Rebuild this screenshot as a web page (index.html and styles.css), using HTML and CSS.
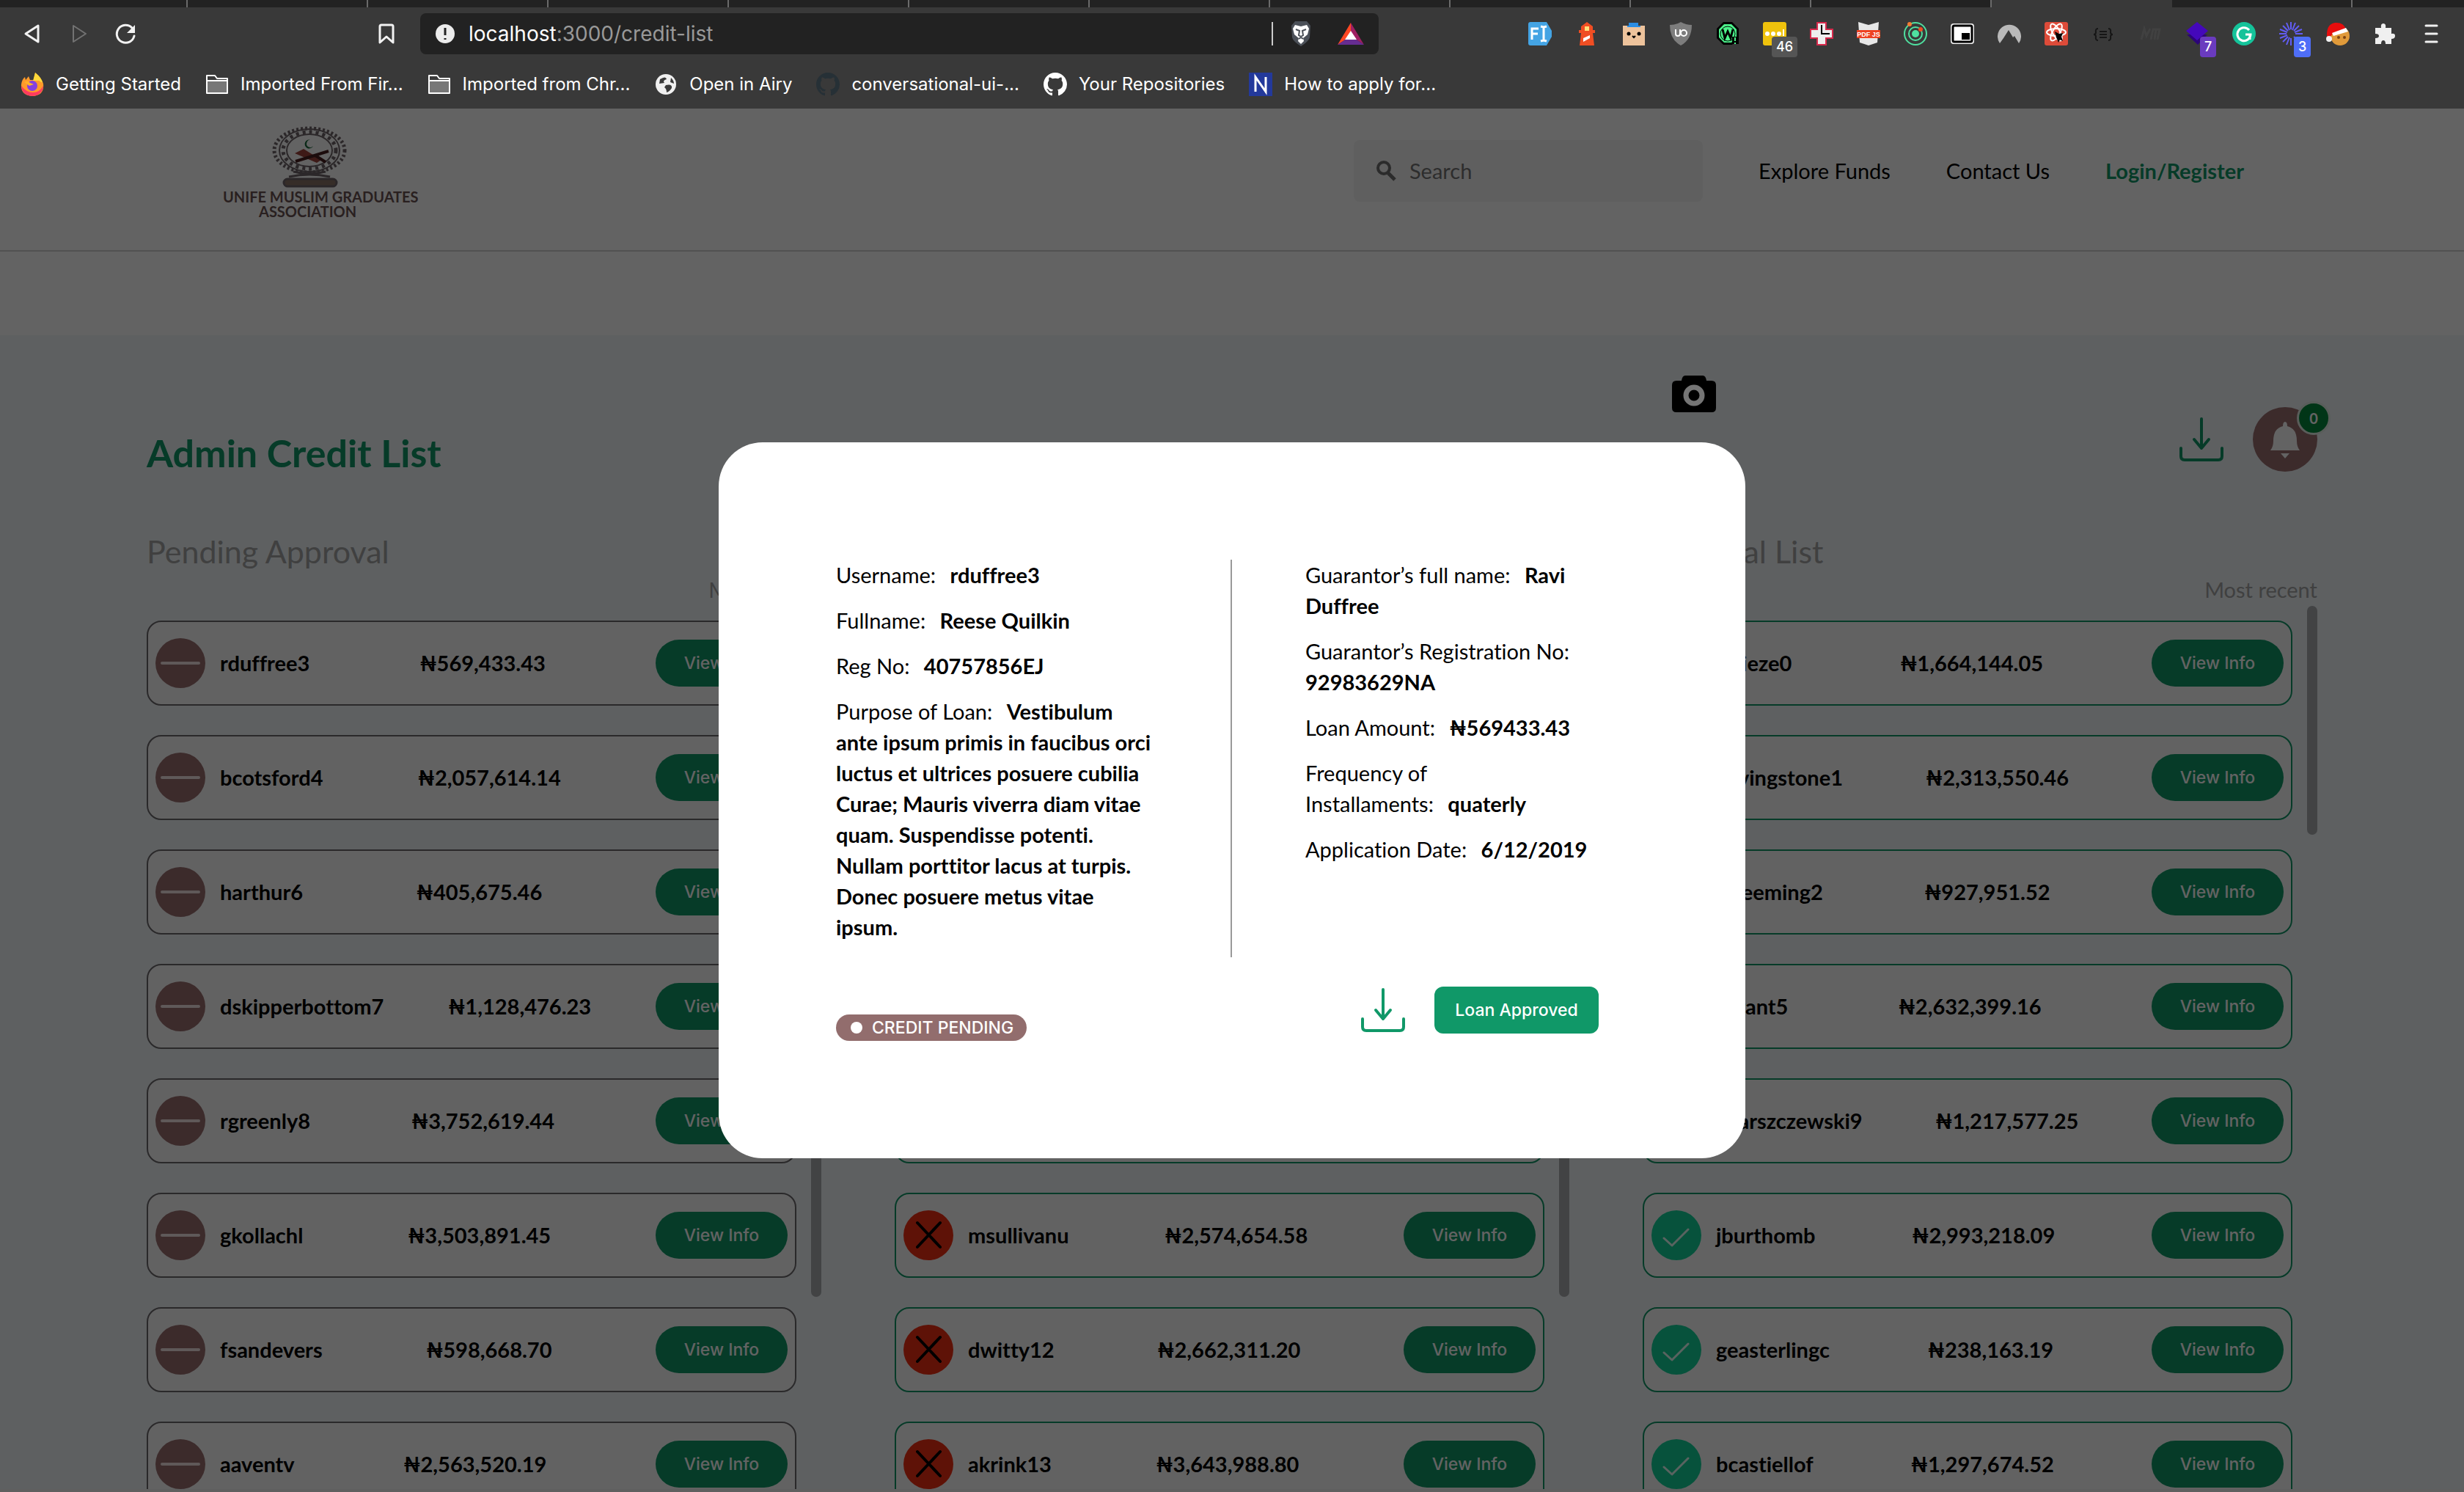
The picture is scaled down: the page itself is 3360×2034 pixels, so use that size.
FILE: index.html
```
<!DOCTYPE html>
<html lang="en">
<head>
<meta charset="utf-8">
<title>Admin Credit List</title>
<link rel="stylesheet" href="styles.css">
</head>
<body>
<svg class="defs" aria-hidden="true">
  <symbol id="pending" viewBox="0 0 68 68"><circle cx="34" cy="34" r="34" fill="#9a6f70"/><path d="M9 34h50" stroke="#f4e6e4" stroke-width="4" stroke-linecap="round"/></symbol>
  <symbol id="rejected" viewBox="0 0 68 68"><circle cx="34" cy="34" r="34" fill="#f22f14"/><path d="M19 17l31 33M50 17L19 50" stroke="#000" stroke-width="4" stroke-linecap="round"/></symbol>
  <symbol id="approved" viewBox="0 0 68 68"><circle cx="34" cy="34" r="34" fill="#14d29a"/><path d="M17 38l11 10 22-22" fill="none" stroke="#e4fff6" stroke-width="3" stroke-linecap="round" stroke-linejoin="round"/></symbol>
  <symbol id="download" viewBox="0 0 60 60"><g fill="none" stroke="#109868" stroke-width="4" stroke-linecap="round" stroke-linejoin="round"><path d="M30 2v40M20 30l10 12 10-12"/><path d="M2 42v11q0 5 5 5h46q5 0 5-5V42"/></g></symbol>
  <symbol id="folder" viewBox="0 0 32 32"><path d="M2 28V4h11l3 4h14v20z" fill="#3a3a3a" stroke="#fff" stroke-width="2" stroke-linejoin="round"/><path d="M3 12h26v15H3z" fill="#777"/><path d="M2 11h28" stroke="#fff" stroke-width="2"/></symbol>
  <symbol id="octocat" viewBox="0 0 16 16"><path d="M8 0C3.58 0 0 3.58 0 8c0 3.54 2.29 6.53 5.47 7.59.4.07.55-.17.55-.38 0-.19-.01-.82-.01-1.49-2.01.37-2.53-.49-2.69-.94-.09-.23-.48-.94-.82-1.13-.28-.15-.68-.52-.01-.53.63-.01 1.08.58 1.23.82.72 1.21 1.87.87 2.33.66.07-.52.28-.87.51-1.07-1.78-.2-3.64-.89-3.64-3.95 0-.87.31-1.59.82-2.15-.08-.2-.36-1.02.08-2.12 0 0 .67-.21 2.2.82a7.6 7.6 0 0 1 4 0c1.53-1.04 2.2-.82 2.2-.82.44 1.1.16 1.92.08 2.12.51.56.82 1.27.82 2.15 0 3.07-1.87 3.75-3.65 3.95.29.25.54.73.54 1.48 0 1.07-.01 1.93-.01 2.2 0 .21.15.46.55.38A8.01 8.01 0 0 0 16 8c0-4.42-3.58-8-8-8z" fill="currentColor"/></symbol>
</svg>

<header class="browser">
  <div class="tabs"><i></i><i></i><i></i><i></i><i></i><i></i><i></i><i></i><i></i><i></i><i></i><i class="active"></i><i></i><i></i></div>
  <div class="toolbar">
    <div class="moves">
      <button class="tool" aria-label="Back"><svg viewBox="0 0 32 32"><path d="M24 5v22L7 16z" fill="none" stroke="#f2f2f2" stroke-width="3" stroke-linejoin="round"/></svg></button>
      <button class="tool" aria-label="Forward"><svg viewBox="0 0 32 32"><path d="M8 5v22l17-11z" fill="none" stroke="#727272" stroke-width="2" stroke-linejoin="round"/></svg></button>
      <button class="tool" aria-label="Reload"><svg viewBox="0 0 32 32"><path d="M27 19A12 12 0 1 1 24 8" fill="none" stroke="#f2f2f2" stroke-width="3" stroke-linecap="round"/><path d="M28 4v11H17z" fill="#f2f2f2"/></svg></button>
      <button class="tool mark" aria-label="Bookmark"><svg viewBox="0 0 32 32"><path d="M7 28V6q0-2 2-2h14q2 0 2 2v22l-9-8z" fill="none" stroke="#f2f2f2" stroke-width="3" stroke-linejoin="round"/></svg></button>
    </div>
    <div class="address">
      <svg viewBox="0 0 28 28" class="info"><circle cx="14" cy="14" r="13" fill="#ececec"/><path d="M14 6v10M14 20v2" stroke="#222" stroke-width="3"/></svg>
      <span class="url"><b>localhost</b>:3000/credit-list</span>
      <span class="bar"></span>
      <svg viewBox="0 0 32 36" class="shield"><path d="M8 1h16l5 6-1 16q-1 5-12 12Q5 28 4 23L3 7z" fill="#4b5058"/><path d="M8 6l8 2 8-2 3 5-2 8-6 5 1 4-4 4-4-4 1-4-6-5-2-8z" fill="#fff"/><path d="M9 12l5 2-1 6 3 2 3-2-1-6 5-2M13 25l3-2 3 2" fill="none" stroke="#4b5058" stroke-width="2"/></svg>
      <svg viewBox="0 0 36 32" class="bat"><path d="M18 1L0 31l18-12z" fill="#ff4724"/><path d="M18 1l18 30-18-12z" fill="#9e1f63"/><path d="M0 31h36L18 19z" fill="#662d91"/><path d="M18 12l8 12H10z" fill="#fff"/></svg>
    </div>
    <div class="extensions">
      <svg viewBox="0 0 32 32"><path d="M3 0h22l7 12v8l-7 12H3q-3 0-3-3V3q0-3 3-3z" fill="#44a4e4"/><path d="M5 24V9h9M5 16h8M17 6l4 1 4-1M17 26l4-1 4 1M21 7v18" fill="none" stroke="#fff" stroke-width="3"/></svg>
      <svg viewBox="0 0 32 32"><path d="M16 0l8 6v5h3v4h-3l2 17H6l2-17H5v-4h3V6z" fill="#f04e23"/><path d="M13 6h6v6h-6z" fill="#ffe07a"/><path d="M11 22l9-4v4l-9 5z" fill="#fff"/></svg>
      <svg viewBox="0 0 32 32"><path d="M1 5h30v27H1z" fill="#eec39c"/><path d="M9 1h13v4h3v2H7V5h2z" fill="#2b8de3"/><circle cx="9" cy="16" r="2.500"/><circle cx="23" cy="16" r="2.500"/><path d="M14 19l2 2 2-2" stroke="#000" stroke-width="2" fill="none"/></svg>
      <svg viewBox="0 0 32 32"><path d="M16 0q7 4 15 4 0 20-15 28Q1 24 1 4q8 0 15-4z" fill="#7d7d7d"/><path d="M9 10v6q0 3 3 3t3-3v-6" fill="none" stroke="#fff" stroke-width="2"/><circle cx="20" cy="15" r="4" fill="none" stroke="#fff" stroke-width="2"/></svg>
      <svg viewBox="0 0 32 32"><path d="M10 0h12l9 9v13l-9 9H10l-9-9V9z" fill="#000"/><path d="M11 3h10l7 7v11l-7 7H11l-7-7V10z" fill="#4cf58c"/><circle cx="16" cy="16" r="10" fill="#4cf58c" stroke="#000" stroke-width="1"/><path d="M9 10l3 12 4-9 4 9 3-12" fill="none" stroke="#000" stroke-width="3"/><path d="M22 20h9v10h-9z"/><path d="M26 21v5M26 28v2" stroke="#4cf58c" stroke-width="2"/></svg>
      <span class="ext"><svg viewBox="0 0 32 32"><rect width="32" height="32" rx="3" fill="#efc20c"/><g fill="#fff"><circle cx="6" cy="16" r="3"/><circle cx="14" cy="16" r="3"/><circle cx="22" cy="16" r="3"/></g><path d="M28 10v9" stroke="#fff" stroke-width="2"/></svg><em class="count grey">46</em></span>
      <svg viewBox="0 0 32 32"><path d="M10 1h12v9h9v12h-9v9H10v-9H1V10h9z" fill="#eee" stroke="#d6294b" stroke-width="2"/><path d="M16 4v12h11" fill="none" stroke="#000" stroke-width="2"/></svg>
      <svg viewBox="0 0 32 32"><path d="M2 0l14 4 14-4-2 28-12 4-12-4z" fill="#e8e8e8"/><path d="M0 11h32v11H0z" fill="#ee4323"/><text x="16" y="20" text-anchor="middle" class="pdf">PDF JS</text></svg>
      <svg viewBox="0 0 32 32"><g fill="none" stroke="#4fe0a0" stroke-width="2"><circle cx="16" cy="16" r="15"/><circle cx="16" cy="16" r="9"/></g><circle cx="16" cy="16" r="5" fill="#4fe0a0"/><circle cx="8" cy="3" r="3" fill="#f47b32"/><circle cx="23" cy="10" r="3" fill="#f04e23"/></svg>
      <svg viewBox="0 0 32 32"><rect y="2" width="32" height="28" rx="4" fill="#eee"/><rect x="3" y="5" width="26" height="22" rx="2" fill="#fff" stroke="#000" stroke-width="3"/><path d="M15 15h11v9H15z"/></svg>
      <svg viewBox="0 0 32 32"><path d="M3 29a16 16 0 1 1 26 0l-6-10-2 2-6-10-7 11z" fill="#b9b9b9"/></svg>
      <svg viewBox="0 0 32 32"><rect width="32" height="32" rx="3" fill="#dd4b39"/><g fill="none" stroke="#fff" stroke-width="2"><ellipse cx="16" cy="14" rx="13" ry="5"/><ellipse cx="16" cy="14" rx="13" ry="5" transform="rotate(60 16 14)"/><ellipse cx="16" cy="14" rx="13" ry="5" transform="rotate(120 16 14)"/></g><path d="M14 13l6 3 5-1-2 5 2 6-4-2-2 4-3-7z"/></svg>
      <svg viewBox="0 0 32 32"><path d="M9 9q-4 0-3 5 0 3-3 3 3 0 3 3-1 5 3 5M23 9q4 0 3 5 0 3 3 3-3 0-3 3 1 5-3 5M11 13h10M11 17h10M11 21h10" fill="none" stroke="#161616" stroke-width="2"/></svg>
      <svg viewBox="0 0 32 32"><path d="M4 24L8 9l3 10 5-10M17 24l3-14h4l-2 14M24 10h5l-3 14" fill="none" stroke="#414141" stroke-width="3"/></svg>
      <span class="ext"><svg viewBox="0 0 32 32"><path d="M2 17h28L17 31z" fill="#2c0478"/><path d="M16 0l15 12-15 13L1 12z" fill="#4408ba"/></svg><em class="count violet">7</em></span>
      <svg viewBox="0 0 32 32"><circle cx="16" cy="16" r="16" fill="#15c39a"/><path d="M23 11a9 9 0 1 0 2 6h-7M24 17v7" fill="none" stroke="#fff" stroke-width="3"/></svg>
      <span class="ext"><svg viewBox="0 0 32 32"><path d="M16 0v10M16 22v10M0 16h10M22 16h10M5 5l7 7M20 20l7 7M27 5l-7 7M12 20l-7 7M10 1l4 10M22 1l-4 10M1 10l10 4M1 22l10-4M31 10l-10 4M10 31l4-10" stroke="#625df5" stroke-width="2"/></svg><em class="count blue">3</em></span>
      <svg viewBox="0 0 32 32"><circle cx="19" cy="19" r="13" fill="#e09a3a"/><path d="M1 20Q0 3 12 1q12-1 15 9l-18 6-4 5z" fill="#e80d0d"/><path d="M8 15l19-7 3 5-20 6z" fill="#fff"/><circle cx="4" cy="23" r="4" fill="#f2f2f2"/><circle cx="17" cy="21" r="2" fill="#7b4312"/><circle cx="25" cy="21" r="2" fill="#7b4312"/></svg>
      <svg viewBox="0 0 32 32"><path d="M3 8h8q-1-6 3-6t3 6h8v8q5-1 5 3t-5 4v7h-8q0-5-3-5t-3 5H3v-8q5 0 5-3t-5-3z" fill="#f0f0f0"/></svg>
      <svg viewBox="0 0 32 32"><path d="M8 5h15M8 16h15M8 27h15" stroke="#f0f0f0" stroke-width="3" stroke-linecap="round"/></svg>
    </div>
  </div>
  <nav class="bookmarks">
    <a href="#"><svg viewBox="0 0 32 32"><path d="M20 0q9 8 11 15 2 16-15 17Q0 31 1 16q1-7 5-10l1 4 4-5 2 5 5 0z" fill="#ff9a2a"/><path d="M1 18q1 13 15 14 14-1 15-14-5 9-14 9T1 18z" fill="#ff3b60"/><path d="M20 0q9 7 10 14l-5-3-8 0z" fill="#ffd83a"/><circle cx="16" cy="18" r="7" fill="#8440e0"/><path d="M5 13q5-3 8 1l5 2-6 2z" fill="#ffb12a"/></svg>Getting Started</a>
    <a href="#"><svg><use href="#folder"/></svg>Imported From Fir...</a>
    <a href="#"><svg><use href="#folder"/></svg>Imported from Chr...</a>
    <a href="#"><svg viewBox="0 0 32 32"><circle cx="16" cy="16" r="14" fill="#f0f0f0"/><path d="M8 9q8-5 9 0-6 2-3 5l-7 1zM16 17q9-2 8 4-3 5-7 6 0-5-3-7zM23 7q4 4 4 8l-5-2z" fill="#3a3a3a"/></svg>Open in Airy</a>
    <a href="#"><svg class="dim"><use href="#octocat"/></svg>conversational-ui-...</a>
    <a href="#"><svg><use href="#octocat"/></svg>Your Repositories</a>
    <a href="#"><svg viewBox="0 0 32 32"><path d="M0 0h32v32H0z" fill="#23399b"/><path d="M9 26V6l14 20V6" fill="none" stroke="#fff" stroke-width="3"/></svg>How to apply for...</a>
  </nav>
</header>

<div class="viewport">
  <div class="site">
    <header class="site-head">
      <a href="#" class="brand">
        <svg viewBox="0 0 104 84" class="crest"><g fill="none" stroke="#70666a"><ellipse cx="52" cy="33" rx="48" ry="30" stroke-width="5" stroke-dasharray="3 3"/><ellipse cx="52" cy="33" rx="41" ry="29" stroke-width="2"/><ellipse cx="52" cy="33" rx="36" ry="25" stroke-width="5" stroke-dasharray="4 5"/><ellipse cx="52" cy="33" rx="31" ry="22" stroke-width="2"/><path d="M24 69q28-6 56 0M30 62q22 5 44 0" stroke-width="3"/><rect x="17" y="72" width="72" height="10" rx="5" fill="#8c7468" stroke-width="3"/></g><path d="M54 19a6 6 0 1 0 3 8 5 5 0 1 1-3-8z" fill="#1c6a3c"/><path d="M32 37l12-6 24 15-6 4z" fill="#a0443c"/><path d="M33 48l45-14M60 40l14 9" stroke="#4a2020" stroke-width="4"/></svg>
        <span>UNIFE MUSLIM GRADUATES</span><span class="second">ASSOCIATION</span>
      </a>
      <nav class="links">
        <label class="search"><svg viewBox="0 0 28 28"><circle cx="11" cy="10" r="8" fill="none" stroke="#6f6f6f" stroke-width="4"/><path d="M17 17l9 9" stroke="#6f6f6f" stroke-width="5"/></svg><input type="text" placeholder="Search" aria-label="Search"></label>
        <a href="#">Explore Funds</a>
        <a href="#">Contact Us</a>
        <a href="#" class="login">Login/Register</a>
      </nav>
    </header>

    <main class="admin">
      <div class="admin-head">
        <h1>Admin Credit List</h1>
        <div class="actions">
          <button class="download" aria-label="Download list"><svg><use href="#download"/></svg></button>
          <button class="bell" aria-label="Notifications"><svg viewBox="0 0 88 88"><path d="M44 20q3 0 3 6 13 3 13 20 0 8 4 13H24q4-5 4-13 0-17 13-20 0-6 3-6zM38 63h12l-6 7z" fill="#fff"/></svg><span class="zero">0</span></button>
        </div>
      </div>

      <div class="columns">
        <section class="column">
          <h2>Pending Approval</h2>
          <p class="sort">Most recent</p>
          <ul class="list grey-list">
            <li><svg><use href="#pending"/></svg><span class="who">rduffree3</span><span class="sum">₦569,433.43</span><button>View Info</button></li>
            <li><svg><use href="#pending"/></svg><span class="who">bcotsford4</span><span class="sum">₦2,057,614.14</span><button>View Info</button></li>
            <li><svg><use href="#pending"/></svg><span class="who">harthur6</span><span class="sum">₦405,675.46</span><button>View Info</button></li>
            <li><svg><use href="#pending"/></svg><span class="who">dskipperbottom7</span><span class="sum">₦1,128,476.23</span><button>View Info</button></li>
            <li><svg><use href="#pending"/></svg><span class="who">rgreenly8</span><span class="sum">₦3,752,619.44</span><button>View Info</button></li>
            <li><svg><use href="#pending"/></svg><span class="who">gkollachl</span><span class="sum">₦3,503,891.45</span><button>View Info</button></li>
            <li><svg><use href="#pending"/></svg><span class="who">fsandevers</span><span class="sum">₦598,668.70</span><button>View Info</button></li>
            <li><svg><use href="#pending"/></svg><span class="who">aaventv</span><span class="sum">₦2,563,520.19</span><button>View Info</button></li>
          </ul>
          <span class="thumb long"></span>
        </section>
        <section class="column">
          <h2></h2>
          <p class="sort"></p>
          <ul class="list">
            <li></li>
            <li></li>
            <li></li>
            <li></li>
            <li></li>
            <li><svg><use href="#rejected"/></svg><span class="who">msullivanu</span><span class="sum">₦2,574,654.58</span><button>View Info</button></li>
            <li><svg><use href="#rejected"/></svg><span class="who">dwitty12</span><span class="sum">₦2,662,311.20</span><button>View Info</button></li>
            <li><svg><use href="#rejected"/></svg><span class="who">akrink13</span><span class="sum">₦3,643,988.80</span><button>View Info</button></li>
          </ul>
          <span class="thumb long"></span>
        </section>
        <section class="column">
          <h2>Approval List</h2>
          <p class="sort">Most recent</p>
          <ul class="list">
            <li><svg><use href="#approved"/></svg><span class="who">mrieze0</span><span class="sum">₦1,664,144.05</span><button>View Info</button></li>
            <li><svg><use href="#approved"/></svg><span class="who">glivingstone1</span><span class="sum">₦2,313,550.46</span><button>View Info</button></li>
            <li><svg><use href="#approved"/></svg><span class="who">mreeming2</span><span class="sum">₦927,951.52</span><button>View Info</button></li>
            <li><svg><use href="#approved"/></svg><span class="who">cgrant5</span><span class="sum">₦2,632,399.16</span><button>View Info</button></li>
            <li><svg><use href="#approved"/></svg><span class="who">iwarszczewski9</span><span class="sum">₦1,217,577.25</span><button>View Info</button></li>
            <li><svg><use href="#approved"/></svg><span class="who">jburthomb</span><span class="sum">₦2,993,218.09</span><button>View Info</button></li>
            <li><svg><use href="#approved"/></svg><span class="who">geasterlingc</span><span class="sum">₦238,163.19</span><button>View Info</button></li>
            <li><svg><use href="#approved"/></svg><span class="who">bcastiellof</span><span class="sum">₦1,297,674.52</span><button>View Info</button></li>
          </ul>
          <span class="thumb short"></span>
        </section>
      </div>
    </main>
  </div>

  <div class="overlay">
    <svg class="camera" viewBox="0 0 60 50"><path d="M18 0h24q4 0 5 7h7q6 0 6 6v31q0 6-6 6H6q-6 0-6-6V13q0-6 6-6h7q1-7 5-7z"/><circle cx="30" cy="27" r="11" fill="none" stroke="#757575" stroke-width="7"/></svg>
    <div class="modal" role="dialog" aria-label="Credit details">
      <div class="details">
        <div class="half">
          <p>Username: <b>rduffree3</b></p>
          <p>Fullname: <b>Reese Quilkin</b></p>
          <p>Reg No: <b>40757856EJ</b></p>
          <p>Purpose of Loan: <b>Vestibulum ante ipsum primis in faucibus orci luctus et ultrices posuere cubilia Curae; Mauris viverra diam vitae quam. Suspendisse potenti. Nullam porttitor lacus at turpis. Donec posuere metus vitae ipsum.</b></p>
        </div>
        <div class="half right">
          <p>Guarantor’s full name: <b>Ravi<br>Duffree</b></p>
          <p>Guarantor’s Registration No:<br><b class="flush">92983629NA</b></p>
          <p>Loan Amount: <b>₦569433.43</b></p>
          <p>Frequency of<br>Installaments: <b>quaterly</b></p>
          <p>Application Date: <b>6/12/2019</b></p>
        </div>
      </div>
      <div class="modal-foot">
        <span class="status"><i></i>CREDIT PENDING</span>
        <div class="foot-actions">
          <button class="download" aria-label="Download details"><svg><use href="#download"/></svg></button>
          <button class="approve">Loan Approved</button>
        </div>
      </div>
    </div>
  </div>
</div>
</body>
</html>
```
FILE: styles.css
```
* { box-sizing: border-box; }
body {
  margin: 0;
  height: 100vh;
  display: flex;
  flex-direction: column;
  overflow: hidden;
  font-family: Lato, "Open Sans", sans-serif;
  font-size: 29px;
  line-height: 42px;
  font-variant-ligatures: none;
  color: #000;
}
a { color: inherit; text-decoration: none; }
button { font: inherit; border: 0; padding: 0; background: none; }
h1, h2, p, ul { margin: 0; padding: 0; }
svg { display: block; flex: none; }
.defs { position: absolute; width: 0; height: 0; }

/* Browser frame */
.browser { flex: none; background: #393939; font-family: Inter, sans-serif; color: #fff; }
.tabs { display: flex; height: 10px; background: #222; overflow: hidden; padding-left: 10px; }
.tabs i { flex: none; width: 246px; border-right: 2px solid #6a6a6a; }
.tabs .active { background: #393939; border-color: #393939; }
.toolbar { display: flex; align-items: center; height: 72px; padding-right: 28px; }
.moves { display: flex; gap: 32px; width: 573px; padding: 0 30px 0 28px; }
.tool svg { width: 32px; height: 32px; }
.tool.mark { margin-left: auto; }
.address { display: flex; align-items: center; width: 1307px; height: 56px; margin-right: auto; padding: 0 20px; border-radius: 8px; background: #222; color: #999; font-size: 28px; }
.address b { font-weight: 400; color: #fff; }
.info { width: 28px; height: 28px; margin-right: 18px; }
.bar { width: 2px; height: 32px; margin-left: auto; background: #ccc; }
.shield { width: 32px; height: 36px; margin: 0 34px 0 22px; }
.bat { width: 36px; height: 32px; }
.extensions { display: flex; gap: 32px; }
.extensions svg { width: 32px; height: 32px; }
.ext { position: relative; }
.pdf { font: 700 9px "Liberation Sans", sans-serif; fill: #fff; }
.count { position: absolute; top: 20px; left: 20px; padding: 0 6px; border-radius: 4px; font: 500 18px/28px Inter, sans-serif; }
.count.grey { left: 12px; background: #555; }
.count.violet { background: #6a3bbf; }
.count.blue { background: #4f6ef7; }
.bookmarks { display: flex; align-items: center; gap: 33px; height: 66px; padding-left: 28px; font-size: 24px; }
.bookmarks a { display: flex; align-items: center; gap: 16px; }
.bookmarks svg { width: 32px; height: 32px; }
.bookmarks .dim { color: #263036; }

/* Page */
.viewport { position: relative; flex: 1; min-height: 0; background: #f4f4f4; padding-bottom: 4px; }
.site { height: 100%; overflow: hidden; display: flex; flex-direction: column; background: #fff; }
.site-head { flex: none; display: flex; justify-content: space-between; height: 195px; padding: 24px 300px 0; border-bottom: 2px solid #d4d4d4; }
.brand { display: flex; flex-direction: column; padding-left: 4px; font-size: 20px; line-height: 20px; font-weight: 700; color: #6b5252; white-space: nowrap; }
.crest { width: 104px; height: 84px; margin: 0 0 2px 66px; }
.second { padding-left: 49px; }
.links { display: flex; align-items: center; gap: 76px; height: 122px; }
.search { display: flex; align-items: center; gap: 16px; width: 476px; height: 84px; padding-left: 30px; border-radius: 8px; background: #f5f5f5; }
.search svg { width: 28px; height: 28px; }
.search input { flex: 1; min-width: 0; border: 0; outline: 0; background: none; font: inherit; }
.search input::placeholder { color: #757575; opacity: 1; }
.login { color: #109868; font-weight: 700; }

.admin { flex: 1; min-height: 0; display: flex; flex-direction: column; margin-top: 114px; padding: 98px 200px 0; background: #f1f6fa; }
.admin-head { display: flex; justify-content: space-between; align-items: flex-end; height: 88px; }
h1 { font-size: 52px; line-height: 52px; font-weight: 700; color: #109868; }
.actions { display: flex; align-items: center; gap: 40px; }
.download svg { width: 60px; height: 60px; }
.bell { position: relative; width: 88px; height: 88px; border-radius: 50%; background: #9a6f70; }
.bell svg { width: 88px; height: 88px; }
.zero { position: absolute; top: -8px; right: -18px; width: 46px; height: 46px; border: 3px solid #e4f0e8; border-radius: 50%; background: #058a3c; color: #fff; font-size: 20px; line-height: 40px; font-weight: 700; text-align: center; }

.columns { flex: 1; min-height: 0; display: grid; grid-template-columns: repeat(3, 1fr); gap: 100px; margin-top: 85px; }
.column { position: relative; min-height: 0; display: flex; flex-direction: column; }
h2 { height: 48px; font-size: 43px; line-height: 48px; font-weight: 400; color: #a4a6a6; }
.sort { height: 40px; margin-top: 8px; line-height: 40px; text-align: right; color: #a4a6a6; }
.list { flex: 1; min-height: 0; display: flex; flex-direction: column; gap: 40px; margin-top: 2px; padding: 20px 34px 0 0; overflow: hidden; list-style: none; }
.list li { flex: none; display: flex; align-items: center; height: 116px; padding: 0 10px; border: 2px solid #109868; border-radius: 20px; background: #fdfdfd; font-weight: 700; }
.grey-list li { border-color: #6e6a6e; }
.list svg { width: 68px; height: 68px; }
.who { padding-left: 20px; }
.sum { margin: auto; }
.list button { width: 180px; height: 64px; border-radius: 32px; background: #109868; color: #fff; font: 500 23px Inter, sans-serif; }
.thumb { position: absolute; top: 98px; right: 0; width: 14px; border-radius: 7px; background: #aaacaf; }
.thumb.short { height: 312px; }
.thumb.long { height: 942px; }

/* Dialog */
.overlay { position: absolute; inset: 0; display: grid; place-items: center; background: rgba(0, 0, 0, .61); }
.camera { position: absolute; top: 364px; left: calc(50% + 600px); width: 60px; height: 50px; }
.modal { width: 1400px; padding: 160px; border-radius: 60px; background: #fff; }
.details { display: grid; grid-template-columns: 1fr 1fr; }
.half { padding-right: 98px; border-right: 2px solid #999; }
.half.right { padding: 0 0 0 100px; border: 0; }
.half p { margin-bottom: 20px; }
.half b { margin-left: 12px; }
.half .flush { margin: 0; }
.modal-foot { display: flex; justify-content: space-between; margin-top: 40px; height: 74px; }
.status { align-self: flex-end; display: flex; align-items: center; gap: 13px; height: 36px; padding: 0 18px 0 20px; border-radius: 18px; background: #926d6d; color: #fff; font: 500 23px Inter, sans-serif; }
.status i { width: 16px; height: 16px; border-radius: 50%; background: #fff; }
.foot-actions { display: flex; gap: 40px; margin-right: 40px; height: 64px; align-items: center; }
.approve { width: 224px; height: 64px; border-radius: 12px; background: #109868; color: #fff; font: 500 23px Inter, sans-serif; }
```
